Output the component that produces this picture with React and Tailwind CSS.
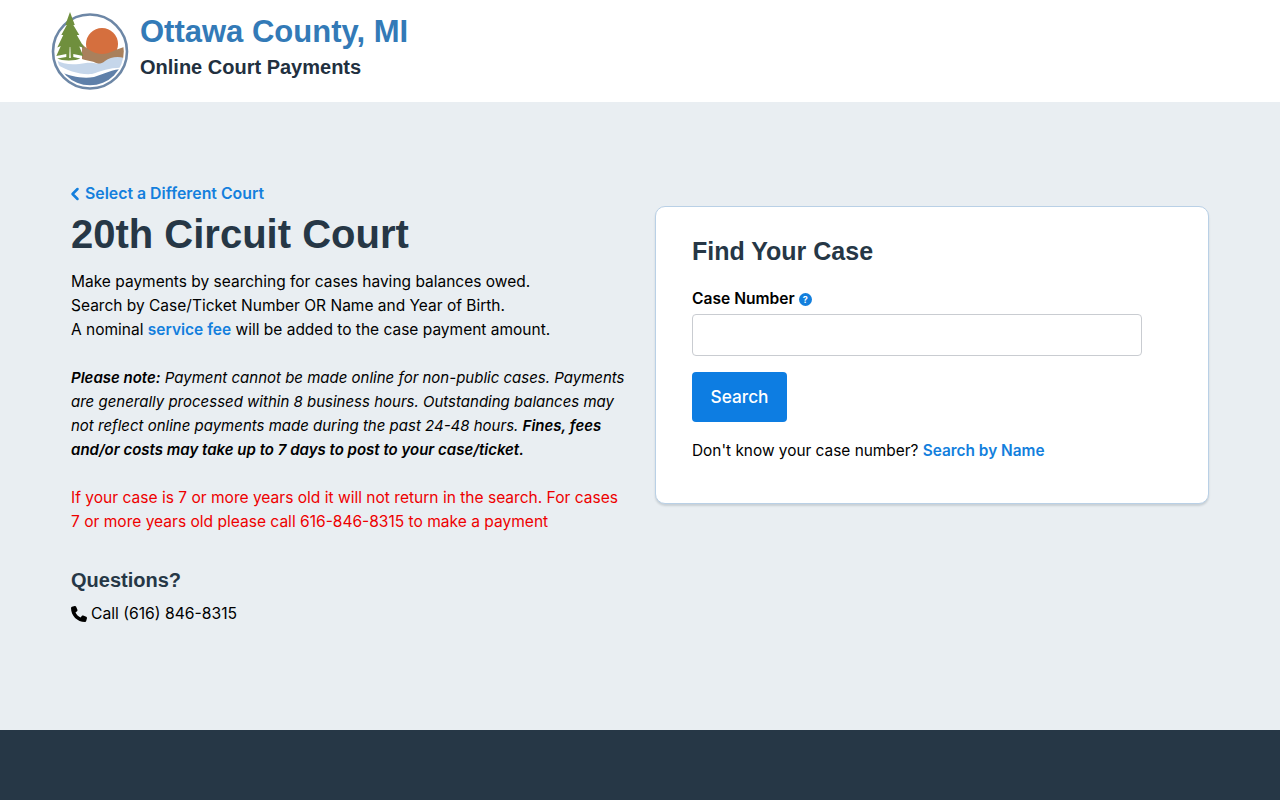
import React from 'react';
import { ChevronLeft } from 'lucide-react';

const Logo = () => (
  <svg width="80" height="80" viewBox="0 0 80 80" className="-ml-[1px] -mt-[1px]">
    <defs>
      <clipPath id="disc">
        <circle cx="41" cy="40.5" r="33.8" />
      </clipPath>
    </defs>
    <circle cx="41" cy="40.5" r="37" fill="#fff" stroke="#6d87a6" strokeWidth="2.6" />
    <g clipPath="url(#disc)">
      {/* sun */}
      <circle cx="53" cy="33" r="16" fill="#d56f3e" />
      {/* land */}
      <path d="M33 33 C39 39 46 43 53 43 C61 43 67 38 75 36 L75 47 C67 47 59 49 51 54 C45 50 39 50 33 48 Z" fill="#a9805c" />
      {/* light water */}
      <path d="M7 49 C15 54 25 54 37 52 C45 51 51 55 56 50 C61 46 69 45 75 47 L75 57 C63 56 53 60 43 63 C31 64 19 60 7 53 Z" fill="#c5d6ea" />
      {/* deep water */}
      <path d="M12 61 C21 65 33 68 45 66 C55 63 63 58 75 58 L75 75 L7 75 Z" fill="#5f80a9" />
    </g>
    {/* pine */}
    <path d="M21 1 L25.8 14 L24.3 14 L30.3 24 L27.8 24 L35.3 37 L30.3 35.5 L34.3 45 L24.3 43 L24.3 46 L31.3 47.5 C27.3 50 12.3 50 8.3 47.5 L17.3 46 L17.3 43 L7.3 45 L11.8 35 L8.3 36.5 L14.3 24 L12.3 24 L17.8 14 L16.3 14 Z" fill="#6f8f3d" />
    <path d="M20.6 36 L21.4 36 L21.9 47 L20.1 47 Z" fill="#e6ecd9" />
  </svg>
);

const PhoneIcon = () => (
  <svg width="16" height="16" viewBox="0 0 512 512" fill="currentColor">
    <path d="M164.9 24.6c-7.7-18.6-28-28.5-47.4-23.2l-88 24C12.1 30.2 0 46 0 64C0 311.4 200.6 512 448 512c18 0 33.8-12.1 38.6-29.5l24-88c5.3-19.4-4.6-39.7-23.2-47.4l-96-40c-16.3-6.8-35.2-2.1-46.3 11.6L304.7 368C234.3 334.7 177.3 277.7 144 207.3L193.3 167c13.7-11.2 18.4-30 11.6-46.3l-40-96z" />
  </svg>
);

const App = () => {
  return (
    <div className="flex flex-col h-[800px] overflow-hidden bg-[#e9eef2] text-black font-['Inter','Liberation_Sans',sans-serif] text-[15.5px] leading-6">
      {/* Header */}
      <header className="h-[102px] shrink-0 bg-white flex items-start pl-[50px] pt-[12px]">
        <Logo />
        <div className="ml-[11px] font-['Liberation_Sans',Arial,sans-serif] font-bold">
          <div className="text-[31px] leading-10 text-[#337ab7]">Ottawa County, MI</div>
          <div className="mt-[3px] text-xl leading-6 text-[#22303f]">Online Court Payments</div>
        </div>
      </header>

      {/* Main Content */}
      <main className="flex-1 grid grid-cols-2 gap-[30px] pl-[71px] pr-[71px] pt-[80px]">
        <section>
          <a className="flex items-center h-6 text-[15.85px] font-semibold text-[#137fdd]">
            <ChevronLeft className="w-5 h-5 -ml-[6px]" strokeWidth={3} />
            Select a Different Court
          </a>
          <h1 className="mt-1 font-['Liberation_Sans',Arial,sans-serif] font-bold text-[40px] leading-[48px] text-[#263746]">
            20th Circuit Court
          </h1>
          <p className="mt-3">
            Make payments by searching for cases having balances owed.
            <br />
            Search by Case/Ticket Number OR Name and Year of Birth.
            <br />
            A nominal <a className="font-semibold text-[#137fdd]">service fee</a> will be added to the case payment amount.
          </p>
          <p className="mt-6 italic text-[15px] whitespace-nowrap">
            <b className="font-semibold">Please note:</b> Payment cannot be made online for non-public cases. Payments
            <br />
            are generally processed within 8 business hours. Outstanding balances may
            <br />
            not reflect online payments made during the past 24-48 hours. <b className="font-semibold">Fines, fees</b>
            <br />
            <b className="font-semibold">and/or costs may take up to 7 days to post to your case/ticket.</b>
          </p>
          <p className="mt-6 text-[#ee0000] text-[15.55px]">
            If your case is 7 or more years old it will not return in the search. For cases 7 or more years old please call 616-846-8315 to make a payment
          </p>
          <h2 className="mt-[34px] font-['Liberation_Sans',Arial,sans-serif] font-bold text-xl leading-6 text-[#263746]">
            Questions?
          </h2>
          <div className="mt-[10px] flex items-center gap-1 text-[15.7px]">
            <PhoneIcon />
            Call (616) 846-8315
          </div>
        </section>

        <section className="mt-[24px] h-[298px] bg-white rounded-[10px] border border-[#b9d0e6] shadow-[0_2px_2px_rgba(38,55,70,0.16)] px-9 pt-[28px]">
          <h2 className="font-['Liberation_Sans',Arial,sans-serif] font-bold text-[25px] leading-8 text-[#263746]">
            Find Your Case
          </h2>
          <label className="mt-5 flex items-center h-6 text-[15.6px] font-semibold">
            Case Number
            <span className="ml-1 w-[13px] h-[13px] rounded-full bg-[#137fdd] text-white text-[9px] leading-[13px] font-bold text-center">?</span>
          </label>
          <input className="mt-[3px] block w-[450px] h-[42px] bg-white border border-[#c9ccd1] rounded" />
          <button className="mt-4 block w-[95px] h-[50px] rounded bg-[#0d7de2] text-white text-[17.3px] font-medium">
            Search
          </button>
          <p className="mt-[17px] text-[15.4px]">
            Don't know your case number? <a className="font-semibold text-[#137fdd]">Search by Name</a>
          </p>
        </section>
      </main>

      {/* Footer */}
      <footer className="h-[70px] shrink-0 bg-[#263746]" />
    </div>
  );
};

export default App;
